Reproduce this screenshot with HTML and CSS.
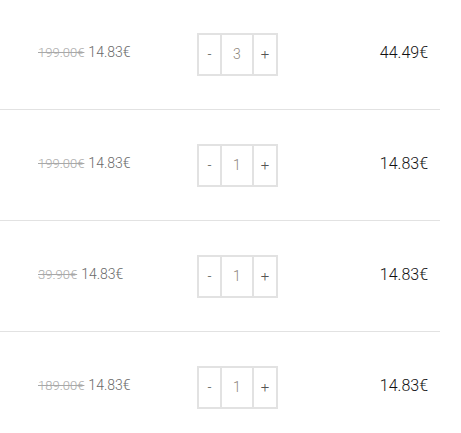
FILE: index.html
```html
<!DOCTYPE html>
<html>
<head>
<meta charset="utf-8">
<link rel="stylesheet" href="styles.css">
</head>
<body>
<div class="cart">
  <div class="row">
    <div class="price"><span class="old">199.00€</span> <span class="new">14.83€</span></div>
    <div class="qty"><span class="btn">-</span><span class="num">3</span><span class="btn plus">+</span></div>
    <div class="total">44.49€</div>
  </div>
  <div class="row">
    <div class="price"><span class="old">199.00€</span> <span class="new">14.83€</span></div>
    <div class="qty"><span class="btn">-</span><span class="num">1</span><span class="btn plus">+</span></div>
    <div class="total">14.83€</div>
  </div>
  <div class="row">
    <div class="price"><span class="old">39.90€</span> <span class="new">14.83€</span></div>
    <div class="qty"><span class="btn">-</span><span class="num">1</span><span class="btn plus">+</span></div>
    <div class="total">14.83€</div>
  </div>
  <div class="row last">
    <div class="price"><span class="old">189.00€</span> <span class="new">14.83€</span></div>
    <div class="qty"><span class="btn">-</span><span class="num">1</span><span class="btn plus">+</span></div>
    <div class="total">14.83€</div>
  </div>
</div>
</body>
</html>
```
FILE: styles.css
```css
html, body {
  margin: 0;
  padding: 0;
  background: #fff;
  font-family: Roboto, "Liberation Sans", sans-serif;
}
.cart {
  width: 440px;
  margin-top: -1px;
}
.row {
  display: flex;
  align-items: center;
  height: 110px;
  border-bottom: 1px solid #e2e2e2;
  padding-left: 38px;
  padding-right: 12px;
}
.row.last {
  border-bottom: none;
}
.price {
  width: 159px;
  padding-bottom: 6px;
  white-space: nowrap;
}
.old {
  font-size: 13px;
  font-weight: 300;
  color: #a8a8a8;
  text-decoration: line-through;
}
.new {
  font-size: 14px;
  font-weight: 300;
  color: #6a6a6a;
}
.qty {
  display: flex;
  height: 39px;
  border: 2px solid #e2e2e2;
}
.btn, .num {
  display: flex;
  align-items: center;
  justify-content: center;
  font-weight: 300;
}
.btn {
  width: 21px;
  color: #555;
  font-size: 14px;
}
.btn.plus {
  width: 22px;
  font-size: 15px;
}
.num {
  width: 30px;
  border-left: 2px solid #e2e2e2;
  border-right: 2px solid #e2e2e2;
  color: #8c8478;
  font-size: 14px;
}
.total {
  flex: 1;
  text-align: right;
  font-size: 16px;
  font-weight: 300;
  color: #111;
  padding-bottom: 3px;
}
```
